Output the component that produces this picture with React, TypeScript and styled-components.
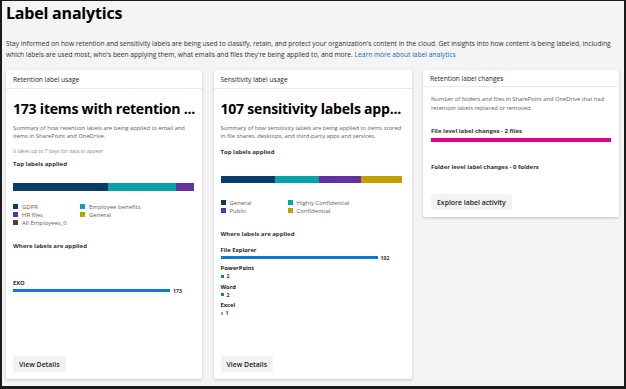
import React from 'react'
import styled, { createGlobalStyle } from 'styled-components'

const GlobalStyle = createGlobalStyle`
  html, body {
    margin: 0;
    padding: 0;
    background: #1b1b1b;
  }
  * {
    box-sizing: border-box;
  }
`

const Frame = styled.div`
  width: 626px;
  height: 389px;
  overflow: hidden;
  border-style: solid;
  border-color: #1b1b1b;
  border-width: 1px 2px 3px 2px;
  background: #f4f4f4;
  padding: 0 4px;
  font-family: "Open Sans", "Noto Sans", sans-serif;
  color: #323130;
`

const Title = styled.h1`
  margin: 1px 0 0 0;
  font-size: 16px;
  line-height: 22px;
  font-weight: 700;
  color: #000;
  letter-spacing: -0.2px;
`

const Intro = styled.p`
  margin: 14px 0 0 0;
  font-size: 6.65px;
  line-height: 11px;
  color: #323130;
`

const Link = styled.a`
  color: #0f6cbd;
  text-decoration: none;
`

const Cards = styled.div`
  display: grid;
  grid-template-columns: 196px 198px 196px;
  column-gap: 11.5px;
  align-items: start;
  margin-top: 10px;
`

const Card = styled.section<{ $height: number }>`
  height: ${p => p.$height}px;
  background: #fff;
  border-radius: 2px;
  box-shadow: 0 1px 3px rgba(0, 0, 0, 0.2);
  display: flex;
  flex-direction: column;
`

const CardHeader = styled.div`
  height: 19px;
  padding: 0 7px;
  display: flex;
  align-items: center;
  font-size: 6.6px;
  color: #201f1e;
  border-bottom: 1px solid #edebe9;
`

const CardBody = styled.div<{ $pad?: number; $top?: number }>`
  flex: 1;
  display: flex;
  flex-direction: column;
  padding: ${p => p.$top ?? 7}px ${p => p.$pad ?? 7}px 7px;
`

const BigNumber = styled.div`
  margin-top: 3px;
  font-size: 14.1px;
  line-height: 20px;
  font-weight: 700;
  color: #000;
  white-space: nowrap;
  letter-spacing: -0.25px;
`

const Summary = styled.p<{ $top?: number }>`
  margin: ${p => p.$top ?? 5}px 0 0 0;
  font-size: 5.75px;
  line-height: 8.3px;
  color: #605e5c;
`

const Note = styled.p`
  margin: 6px 0 0 0;
  font-size: 5px;
  line-height: 8px;
  color: #8a8886;
`

const SectionLabel = styled.div<{ $top: number }>`
  margin-top: ${p => p.$top}px;
  font-size: 6px;
  line-height: 8px;
  font-weight: 700;
  color: #323130;
`

const StackBar = styled.div<{ $top: number; $height: number }>`
  margin-top: ${p => p.$top}px;
  height: ${p => p.$height}px;
  display: flex;
`

const Segment = styled.div<{ $color: string }>`
  background: ${p => p.$color};
`

const Legend = styled.div<{ $top: number }>`
  margin-top: ${p => p.$top}px;
  display: grid;
  grid-template-columns: 67px 1fr;
`

const LegendItem = styled.div`
  display: flex;
  align-items: center;
  gap: 4px;
  font-size: 6px;
  line-height: 8px;
  color: #605e5c;
`

const Swatch = styled.span<{ $color: string }>`
  width: 5px;
  height: 5px;
  background: ${p => p.$color};
  flex: none;
`

const AppList = styled.div<{ $top: number }>`
  margin-top: ${p => p.$top}px;
  display: flex;
  flex-direction: column;
  gap: 2.5px;
`

const AppRow = styled.div`
  display: flex;
  flex-direction: column;
`

const AppName = styled.div`
  font-size: 5.8px;
  line-height: 8px;
  font-weight: 700;
  color: #201f1e;
`

const BarLine = styled.div`
  display: flex;
  align-items: center;
  gap: 3px;
  height: 8px;
`

const Bar = styled.div<{ $light?: boolean }>`
  height: 3px;
  background: ${p => (p.$light ? '#71afe5' : '#0f78d4')};
`

const BarValue = styled.span`
  font-size: 5.2px;
  font-weight: 700;
  color: #323130;
`

const Button = styled.button<{ $top?: number }>`
  margin-top: ${p => (p.$top === undefined ? 'auto' : `${p.$top}px`)};
  align-self: flex-start;
  height: 16px;
  padding: 0 6px;
  border: none;
  border-radius: 2px;
  background: #f3f2f1;
  font-family: inherit;
  font-size: 6.9px;
  font-weight: 600;
  color: #201f1e;
`

const ChangeBar = styled.div`
  margin-top: 3px;
  height: 4px;
  background: #e3008c;
`

const navy = '#0b3b6b'
const teal = '#0ba3aa'
const purple = '#6331a0'
const gold = '#c29f00'
const brown = '#5d3a2d'

type App = { name: string; value: number }

const AppBars = ({ apps, max, top }: { apps: App[]; max: number; top: number }) => (
  <AppList $top={top}>
    {apps.map(a => (
      <AppRow key={a.name}>
        <AppName>{a.name}</AppName>
        <BarLine>
          <Bar $light={a.value < 2} style={{ width: Math.max(1, Math.round((a.value / max) * 157)) }} />
          <BarValue>{a.value}</BarValue>
        </BarLine>
      </AppRow>
    ))}
  </AppList>
)

export default function LabelAnalytics() {
  return (
    <Frame>
      <GlobalStyle />
      <Title>Label analytics</Title>
      <Intro>
        Stay informed on how retention and sensitivity labels are being used to classify, retain, and protect your
        organization's content in the cloud. Get insights into how content is being labeled, including which labels
        are used most, who's been applying them, what emails and files they're being applied to, and more.{' '}
        <Link href="#">Learn more about label analytics</Link>
      </Intro>

      <Cards>
        <Card $height={309}>
          <CardHeader>Retention label usage</CardHeader>
          <CardBody>
            <BigNumber>173 items with retention ...</BigNumber>
            <Summary>
              Summary of how retention labels are being applied to email and items in SharePoint and OneDrive.
            </Summary>
            <Note>It takes up to 7 days for data to appear</Note>
            <SectionLabel $top={5}>Top labels applied</SectionLabel>
            <StackBar $top={15} $height={8}>
              <Segment $color={navy} style={{ width: 95 }} />
              <Segment $color={teal} style={{ width: 68 }} />
              <Segment $color={purple} style={{ width: 18 }} />
            </StackBar>
            <Legend $top={12}>
              <LegendItem><Swatch $color={navy} />GDPR</LegendItem>
              <LegendItem><Swatch $color={teal} />Employee benefits</LegendItem>
              <LegendItem><Swatch $color={purple} />HR files</LegendItem>
              <LegendItem><Swatch $color={gold} />General</LegendItem>
              <LegendItem><Swatch $color={brown} />All Employees_0</LegendItem>
            </Legend>
            <SectionLabel $top={15}>Where labels are applied</SectionLabel>
            <AppBars top={29} max={173} apps={[{ name: 'EXO', value: 173 }]} />
            <Button>View Details</Button>
          </CardBody>
        </Card>

        <Card $height={309}>
          <CardHeader>Sensitivity label usage</CardHeader>
          <CardBody>
            <BigNumber>107 sensitivity labels app...</BigNumber>
            <Summary>
              Summary of how sensitivity labels are being applied to items stored in file shares, desktops, and
              third-party apps and services.
            </Summary>
            <SectionLabel $top={7}>Top labels applied</SectionLabel>
            <StackBar $top={20} $height={7}>
              <Segment $color={navy} style={{ width: 54 }} />
              <Segment $color={teal} style={{ width: 44 }} />
              <Segment $color={purple} style={{ width: 42 }} />
              <Segment $color={gold} style={{ width: 41 }} />
            </StackBar>
            <Legend $top={16}>
              <LegendItem><Swatch $color={navy} />General</LegendItem>
              <LegendItem><Swatch $color={teal} />Highly Confidential</LegendItem>
              <LegendItem><Swatch $color={purple} />Public</LegendItem>
              <LegendItem><Swatch $color={gold} />Confidential</LegendItem>
            </Legend>
            <SectionLabel $top={15}>Where labels are applied</SectionLabel>
            <AppBars
              top={8}
              max={102}
              apps={[
                { name: 'File Explorer', value: 102 },
                { name: 'PowerPoint', value: 2 },
                { name: 'Word', value: 2 },
                { name: 'Excel', value: 1 },
              ]}
            />
            <Button>View Details</Button>
          </CardBody>
        </Card>

        <Card $height={147}>
          <CardHeader>Retention label changes</CardHeader>
          <CardBody $pad={8} $top={8}>
            <Summary $top={0}>
              Number of folders and files in SharePoint and OneDrive that had retention labels replaced or removed.
            </Summary>
            <SectionLabel $top={15}>File level label changes - 2 files</SectionLabel>
            <ChangeBar />
            <SectionLabel $top={21}>Folder level label changes - 0 folders</SectionLabel>
            <Button $top={23}>Explore label activity</Button>
          </CardBody>
        </Card>
      </Cards>
    </Frame>
  )
}
